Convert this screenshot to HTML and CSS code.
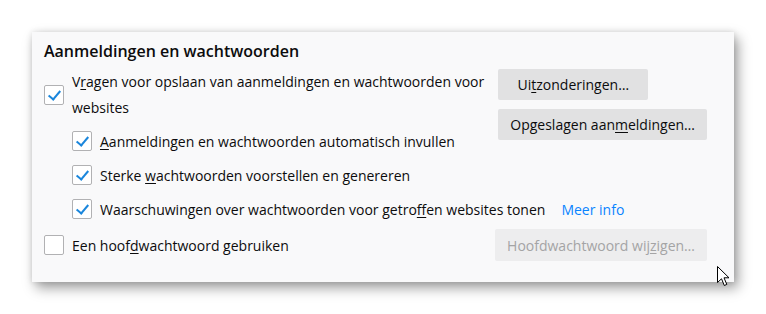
FILE: index.html
```html
<!DOCTYPE html>
<html>

<head>
    <meta charset="UTF-8">
    <title>Aanmeldingen en wachtwoorden</title>
    <link rel="stylesheet" href="styles.css">
</head>

<body>
    <div class="panel">
        <h2 class="title">Aanmeldingen en wachtwoorden</h2>
        <div class="top">
            <div class="left">
                <label class="row main">
                    <span class="box checked"></span>
                    <span class="text">V<u>r</u>agen voor opslaan van aanmeldingen en wachtwoorden voor websites</span>
                </label>
                <label class="row sub">
                    <span class="box checked"></span>
                    <span class="text"><u>A</u>anmeldingen en wachtwoorden automatisch invullen</span>
                </label>
            </div>
            <div class="buttons">
                <button class="btn wide">Ui<u>t</u>zonderingen…</button>
                <button class="btn">Opgeslagen aan<u>m</u>eldingen…</button>
            </div>
        </div>
        <label class="row sub">
            <span class="box checked"></span>
            <span class="text">Sterke <u>w</u>achtwoorden voorstellen en genereren</span>
        </label>
        <label class="row sub">
            <span class="box checked"></span>
            <span class="text">Waarschuwingen over wachtwoorden voor getro<u>f</u>fen websites tonen</span>
            <a class="link">Meer info</a>
        </label>
        <div class="bottom">
            <label class="row">
                <span class="box"></span>
                <span class="text">Een hoof<u>d</u>wachtwoord gebruiken</span>
            </label>
            <button class="btn disabled">Hoofdwachtwoord wij<u>z</u>igen…</button>
        </div>
        <svg class="cursor" width="14" height="21" viewBox="0 0 14 21">
            <path d="M0.5 0.5 L0.5 16.5 L4.5 12.8 L7.3 19.5 L9.8 18.4 L7 11.8 L12 11.8 Z" fill="#fff" stroke="#000" stroke-width="1"/>
        </svg>
    </div>
</body>

</html>
```

FILE: styles.css
```css
*{
    font-family: 'Open Sans', 'Noto Sans', sans-serif;
    box-sizing: border-box;
}
html, body{
    min-height: 314px;
}
body{
    margin: 0;
    background: #ffffff;
    padding: 32px;
}
.panel{
    position: relative;
    width: 702px;
    height: 250px;
    background: #f9f9fa;
    padding: 7px 27px 0 12px;
    box-shadow: 4px 6px 12px rgba(0, 0, 0, 0.38), 0 0 6px rgba(0, 0, 0, 0.12);
    color: #0c0c0d;
}
.title{
    margin: 0;
    font-size: 16px;
    font-weight: 600;
    line-height: 24px;
}
.top{
    display: flex;
    justify-content: space-between;
    margin-top: 6px;
}
.left{
    width: 455px;
}
.row{
    display: flex;
    align-items: center;
    font-size: 14px;
    height: 34px;
}
.row.main{
    height: auto;
    margin-bottom: 3px;
}
.row.main .text{
    line-height: 26px;
    width: 425px;
}
.sub{
    padding-left: 28px;
}
.box{
    flex: none;
    width: 20px;
    height: 20px;
    margin-right: 8px;
    border: 1px solid #b1b1b3;
    border-radius: 2px;
    background: #ffffff;
    position: relative;
}
.box.checked::after{
    content: "";
    position: absolute;
    left: 6px;
    top: 2px;
    width: 5px;
    height: 10px;
    border-right: 2px solid #1a86dc;
    border-bottom: 2px solid #1a86dc;
    transform: rotate(40deg);
}
u{
    text-decoration: underline;
    text-underline-offset: 2px;
}
.link{
    margin-left: 16px;
    color: #0a84ff;
}
.buttons{
    flex: none;
    display: flex;
    flex-direction: column;
    align-items: flex-start;
    gap: 9px;
}
.btn{
    height: 31px;
    padding: 0 12px;
    border: 0;
    border-radius: 2px;
    background: #e1e1e2;
    color: #0c0c0d;
    font-size: 14px;
    white-space: nowrap;
}
.btn.wide{
    min-width: 150px;
}
.btn.disabled{
    height: 32px;
    background: #ededee;
    color: #a4a4a5;
}
.bottom{
    display: flex;
    justify-content: space-between;
    align-items: center;
    margin-top: 2px;
}
.cursor{
    position: absolute;
    left: 685px;
    top: 234px;
}
```
